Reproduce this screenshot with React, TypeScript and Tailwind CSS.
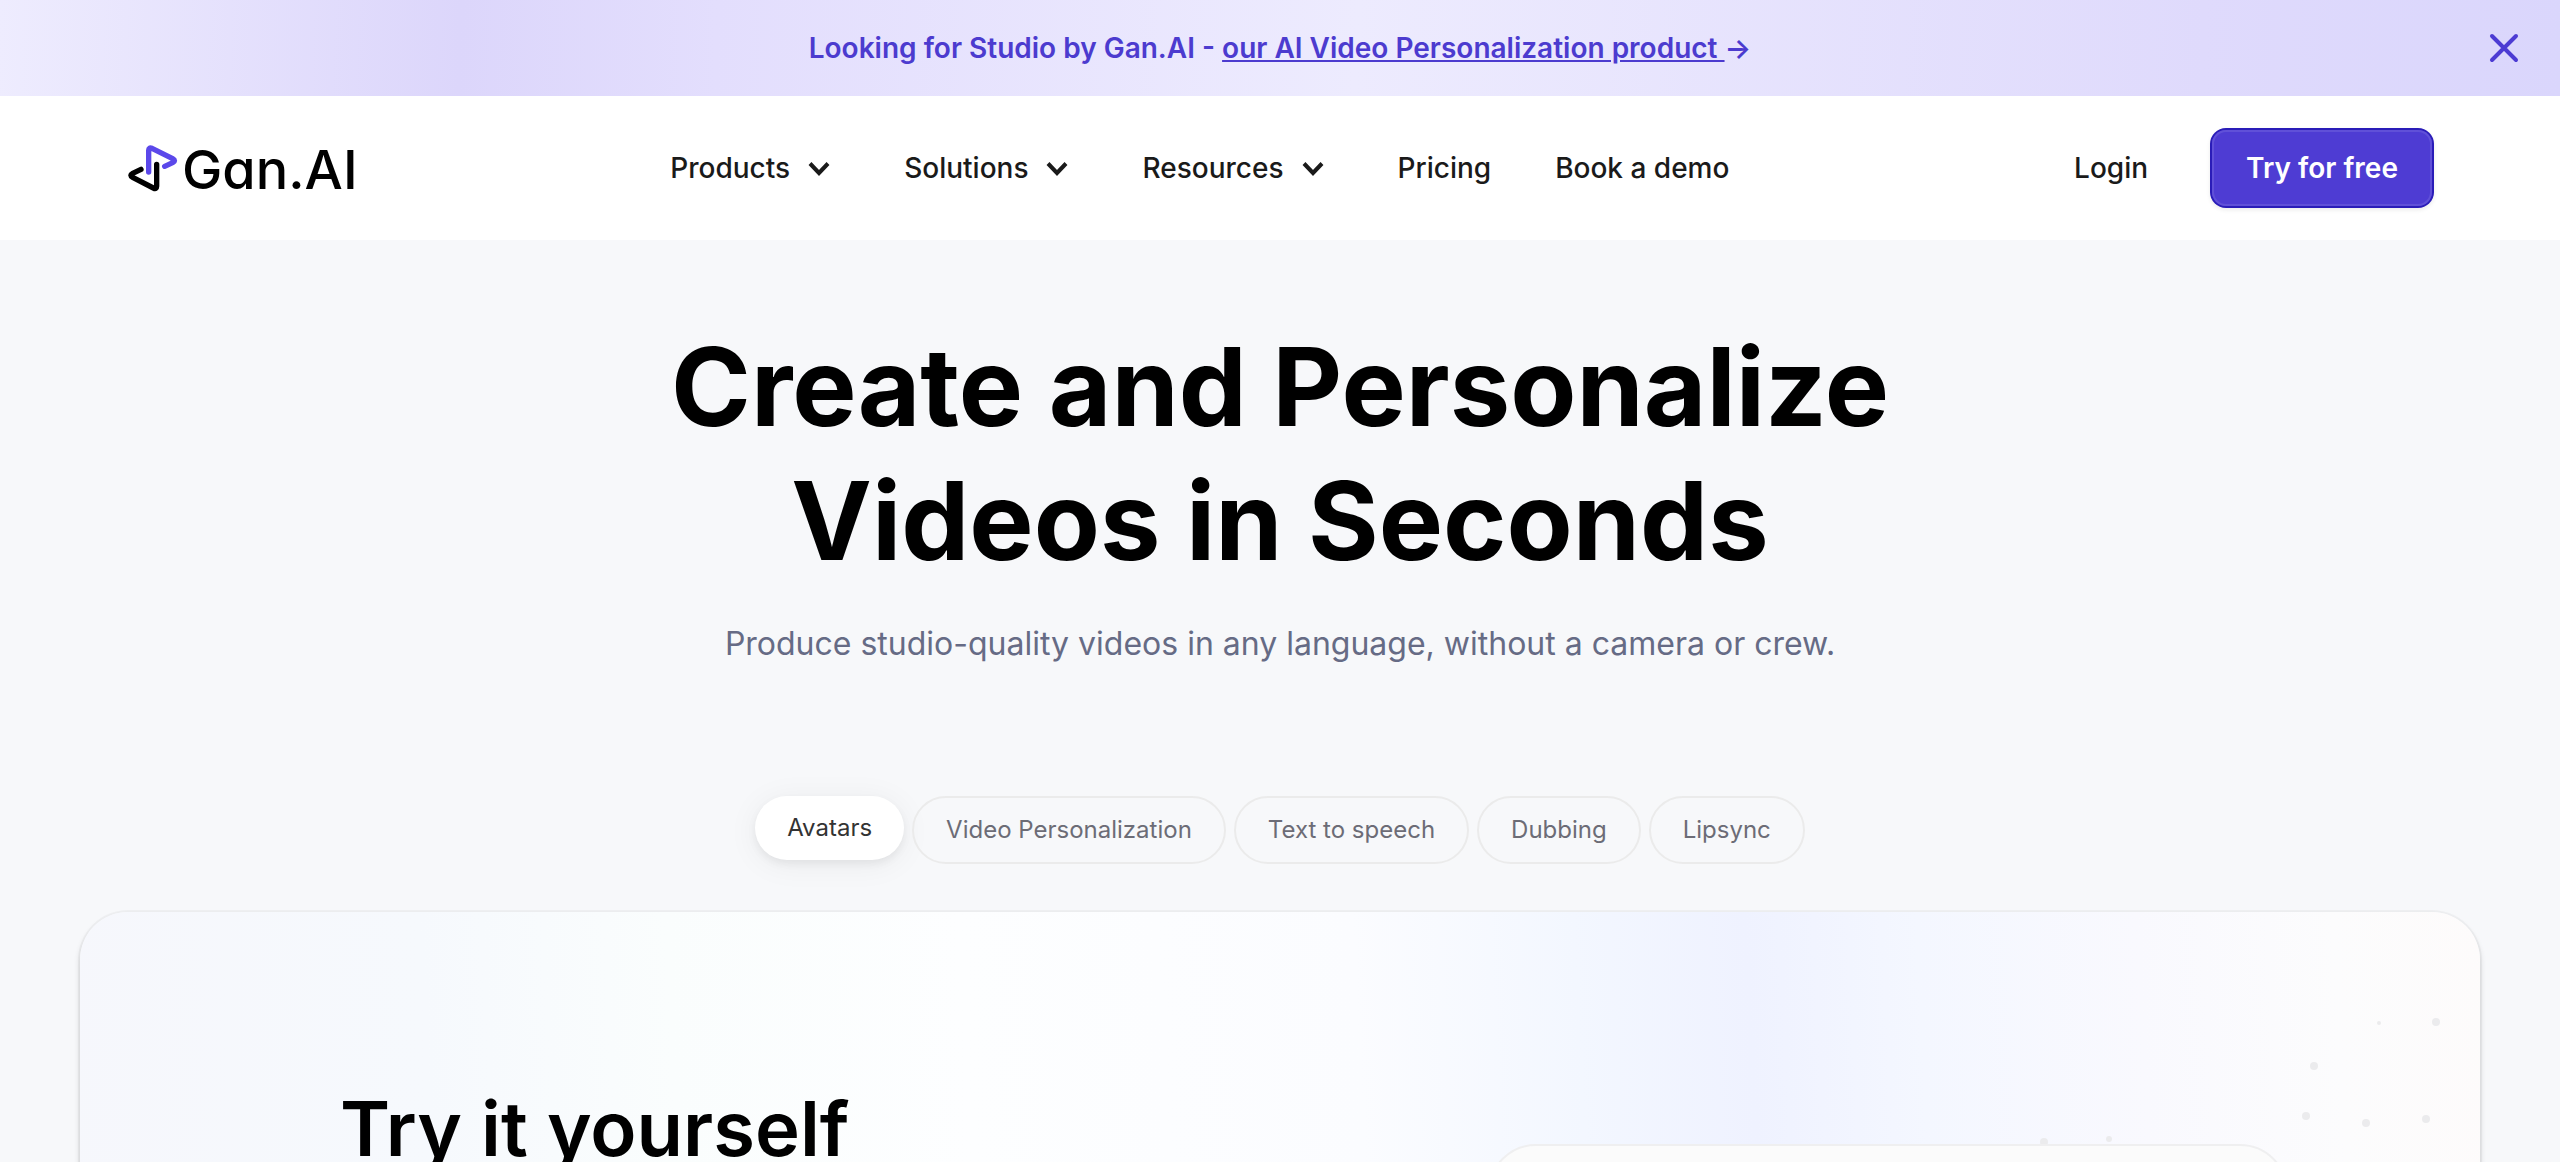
import { useState } from "react";

function LogoMark() {
  return (
    <svg viewBox="84 74 150 141" className="h-[47px] w-[50px] shrink-0" fill="none" strokeWidth="16" strokeLinecap="round" strokeLinejoin="round" aria-hidden="true">
      <path d="M146 155V90Q146 80 156 84L218 115Q229 121 218 127L194 138" stroke="#5b48ea" />
      <path d="M170 132V198Q170 208 160 203L98 171Q87 165 98 159L123 147" stroke="#000" />
    </svg>
  );
}

function Chevron() {
  return (
    <svg viewBox="0 0 40 40" className="size-10" fill="none" stroke="#1a1a1a" strokeWidth="4" aria-hidden="true">
      <path d="M10 15.5l9 9.5 9-9.5" />
    </svg>
  );
}

const menus = ["Products", "Solutions", "Resources"];
const tabs = ["Avatars", "Video Personalization", "Text to speech", "Dubbing", "Lipsync"];
const dots = [
  { x: 339, y: 10, r: 2 },
  { x: 396, y: 9, r: 4 },
  { x: 274, y: 53, r: 4 },
  { x: 266, y: 103, r: 4 },
  { x: 326, y: 110, r: 4 },
  { x: 386, y: 106, r: 4 },
  { x: 4, y: 129, r: 4 },
  { x: 69, y: 126, r: 3 },
];

export default function App() {
  const [active, setActive] = useState("Avatars");
  const [banner, setBanner] = useState(true);

  return (
    <div className="flex h-screen flex-col overflow-hidden bg-[#f7f8fa] font-['Inter',sans-serif] text-[#1a1a1a]">
      {banner && (
        <div className="relative flex h-24 shrink-0 items-center justify-center bg-[linear-gradient(92deg,#eeecfe_0%,#dcd6fb_18%,#e3defd_28%,#edebfe_53%,#dfdafc_86%,#dad6fc_100%)] text-[28px] font-semibold text-[#4c3bcf]">
          <p className="whitespace-pre">
            Looking for Studio by Gan.AI -{" "}
            <a href="#studio" className="underline">our AI Video Personalization product </a>→
          </p>
          <button aria-label="Close banner" onClick={() => setBanner(false)} className="absolute right-8 p-1">
            <svg viewBox="0 0 40 40" className="size-10" fill="none" stroke="#4c3bd3" strokeWidth="4" strokeLinecap="round">
              <path d="M8 8l24 24M32 8L8 32" />
            </svg>
          </button>
        </div>
      )}

      <header className="flex h-36 shrink-0 items-center justify-between bg-white px-32 text-[28px] font-medium">
        <a href="#home" aria-label="Gan.AI" className="flex items-center gap-1">
          <LogoMark />
          <span className="pt-1 text-[54px] leading-none font-medium text-black [font-feature-settings:'cv11']">Gan.AI</span>
        </a>
        <nav className="flex items-center gap-16 px-8">
          {menus.map((m) => (
            <button key={m} className="flex items-center gap-2.5">
              {m}
              <Chevron />
            </button>
          ))}
          <a href="#pricing">Pricing</a>
          <a href="#demo">Book a demo</a>
        </nav>
        <div className="flex items-center gap-8">
          <a href="#login" className="px-8">Login</a>
          <button className="h-[76px] rounded-[14px] bg-[#4e3cd3] px-[34px] font-semibold text-white shadow-[inset_0_0_0_2px_#6050d8,0_0_0_2px_#2a1cb8,0_2px_4px_2px_rgba(0,0,0,0.08)]">
            Try for free
          </button>
        </div>
      </header>

      <main className="flex min-h-0 flex-1 flex-col items-center px-20 pt-20">
        <h1 className="text-center text-[108px] leading-[134px] font-bold text-black">
          Create and Personalize
          <br />
          Videos in Seconds
        </h1>
        <p className="mt-8 text-[32px] leading-[48px] text-[#666b85]">
          Produce studio-quality videos in any language, without a camera or crew.
        </p>

        <div role="tablist" className="mt-32 flex items-start gap-2 text-2xl">
          {tabs.map((t) => (
            <button
              key={t}
              role="tab"
              aria-selected={t === active}
              onClick={() => setActive(t)}
              className={
                t === active
                  ? "rounded-full bg-white px-8 py-4 text-[#333] shadow-[0_4px_8px_rgba(0,0,0,0.06),0_4px_32px_rgba(0,0,20,0.06)]"
                  : "rounded-full border-2 border-[#ebebeb] px-8 py-4 text-[#6c6c76]"
              }
            >
              {t}
            </button>
          ))}
        </div>

        <section className="relative mt-12 flex h-[1000px] w-full shrink-0 items-start justify-between rounded-[48px] bg-[linear-gradient(87deg,#f6f7fc_0%,#f6f9fd_16%,#fafdfd_26%,#fdfeff_38%,#fbfcff_54%,#f3f7ff_63%,#eff2ff_70%,#f4f7ff_77%,#f9f9fe_86%,#fcfcfd_94%,#fdfbfb_100%)] pr-48 pl-[260px] shadow-[0_0_0_2px_rgba(0,0,0,0.03),0_4px_6px_rgba(0,0,0,0.16)]">
          <svg viewBox="0 0 400 140" className="absolute top-[101px] right-[40px] h-[140px] w-[400px]" fill="#ebebed" overflow="visible" aria-hidden="true">
            {dots.map((d) => (
              <circle key={d.x} cx={d.x} cy={d.y} r={d.r} />
            ))}
          </svg>
          <h2 className="mt-[168px] text-[76px] leading-[96px] font-semibold text-black">Try it yourself</h2>
          <div className="relative mt-[232px] h-[600px] w-[800px] rounded-[48px] border-2 border-[#efeff0] bg-[#fbfbfb]" />
        </section>
      </main>
    </div>
  );
}
